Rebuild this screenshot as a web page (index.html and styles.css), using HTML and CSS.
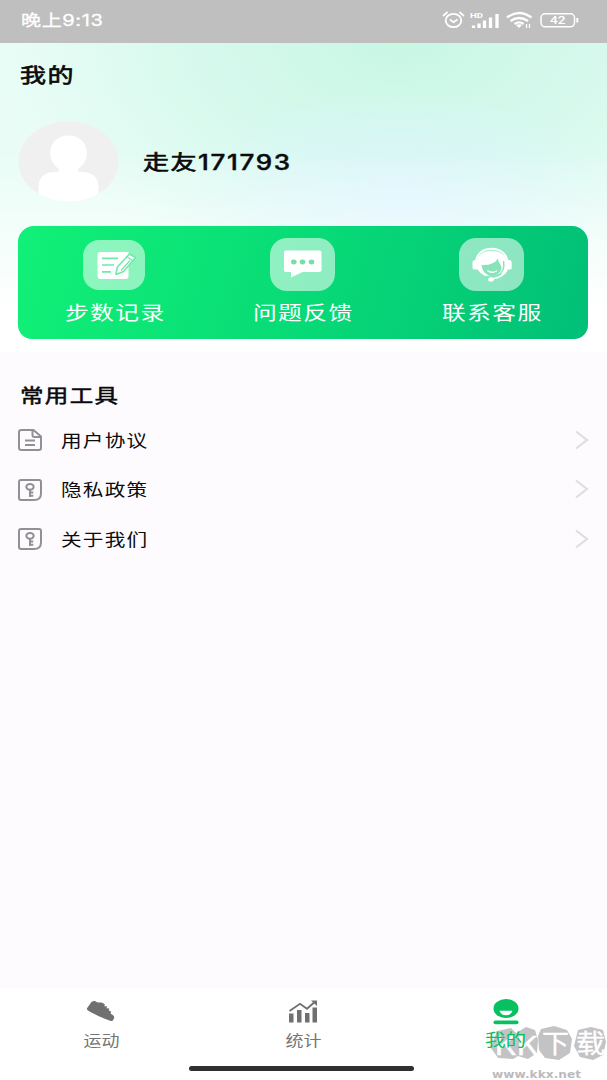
FILE: index.html
```
<!DOCTYPE html>
<html lang="zh-CN">
<head>
<meta charset="utf-8">
<title>我的</title>
<link rel="stylesheet" href="styles.css">
</head>
<body>
<div class="app">
  <header class="status">
    <span class="wide left clock">晚上9:13</span>
    <svg class="status-icons" width="140" height="24" viewBox="0 0 140 24" fill="none" stroke="#fff">
      <ellipse cx="13.5" cy="12.5" rx="7.8" ry="6.7" stroke-width="1.8"/>
      <path d="M10 11.5l3.5 2.7 4-2.7M3 8l4.500-4M24 8l-4.500-4" stroke-width="1.7"/>
      <text class="hd" x="30" y="9.500" textLength="13" lengthAdjust="spacingAndGlyphs">HD</text>
      <path d="M33 17.500v2.500M38.500 15.500v4.500M44 12.500v7.500M50 9.500v10.500M56.500 6v14" transform="translate(.5 0)" stroke-width="3.300"/>
      <path d="M67 9.500q12-9 24.500 0M70.500 13q8.500-6 17.500 0M74.500 16q5-3.300 9 0" stroke-width="2.300"/>
      <path d="M76 17q3-1.500 6 0l-3 3z" fill="#fff" stroke="none"/>
      <path d="M86.500 16v4M89.500 16v4" stroke-width="1.300"/>
      <rect x="101" y="5.800" width="33.500" height="13" rx="4" stroke-width="1.500"/>
      <path d="M137.300 10v4.500" stroke-width="2"/>
      <text class="level" x="110" y="16.300" textLength="15.500" lengthAdjust="spacingAndGlyphs">42</text>
    </svg>
  </header>

  <section class="hero">
    <h1 class="title"><span class="wide left">我的</span></h1>
    <div class="profile">
      <svg class="avatar" width="101" height="81" viewBox="0 0 101 81">
        <defs><clipPath id="face"><ellipse cx="50.500" cy="40.500" rx="50" ry="40.300"/></clipPath></defs>
        <g clip-path="url(#face)">
          <path fill="#f0f0f0" d="M0 0h101v81H0z"/>
          <path fill="#fff" d="M50.500 14.500c11 0 18.300 7.500 18.300 17.500 0 7-3.800 13-8.500 15.500-1.300 2.500.5 3.500 4 3.500 10 0 16.200 5.500 16.200 15V81h-60V66c0-9.500 6-15 16-15 3.500 0 5.500-1 4.200-3.500-4.500-2.500-8.500-8.500-8.500-15.500 0-10 7.300-17.500 18.300-17.500z"/>
        </g>
      </svg>
      <span class="wide left name">走友<span class="digits">171793</span></span>
    </div>
    <nav class="card">
      <a class="action">
        <span class="slot"><svg width="62" height="50" viewBox="0 0 62 50">
          <rect width="62" height="50" rx="16" fill="#fff" fill-opacity=".53"/>
          <path fill="#fff" d="M17 12h28.500v24q0 3-3 3H17.500q-3 0-3-3V14.500q0-2.500 2.500-2.500z"/>
          <path d="M19 18.300h16M19 25h12M19 31.800h9" fill="none" stroke="#6fe9a9" stroke-width="1.700"/>
          <path fill="#fff" stroke="#6fe9a9" stroke-width="1.500" stroke-linejoin="round" d="M46.500 14l6 3.500-12 14-7.500 3 1.300-7.500z"/>
          <path fill="none" stroke="#6fe9a9" stroke-width="1.200" d="M43.500 16.500l6 4M47 20.500l-9 10"/>
        </svg></span>
        <span class="wide label">步数记录</span>
      </a>
      <a class="action">
        <span class="slot"><svg width="65" height="53" viewBox="0 0 65 53">
          <rect width="65" height="53" rx="17" fill="#fff" fill-opacity=".55"/>
          <path fill="#fff" d="M15.500 12.500h34q2 0 2 2v17.500q0 2-2 2H32.500l-11.500 5.500v-5.500h-5.500q-1.500 0-1.500-2V14.500q0-2 1.500-2z"/>
          <g fill="#75dfaa"><ellipse cx="23.800" cy="24" rx="2.800" ry="2.400"/><ellipse cx="32.500" cy="24" rx="2.800" ry="2.400"/><ellipse cx="41.500" cy="24" rx="2.800" ry="2.400"/></g>
        </svg></span>
        <span class="wide label">问题反馈</span>
      </a>
      <a class="action">
        <span class="slot"><svg width="65" height="53" viewBox="0 0 65 53">
          <rect width="65" height="53" rx="17" fill="#fff" fill-opacity=".55"/>
          <path d="M17 23C19 6.500 46 6.500 48.500 23" fill="none" stroke="#fff" stroke-width="2"/>
          <path fill="#fff" d="M18 22C20.500 9.800 44.500 9.800 47.500 22h3q2.200.3 2.200 2v6q0 1.500-2 1.500h-2.200Q46 38 38 40.500H33q7-1.500 10-5L26 38q-4.500-2-7.500-6.500h-3q-2 0-2-1.500v-6q0-1.700 2.500-2z"/>
          <path fill="#86e4b8" d="M22.500 27q6 .5 10.500-1.500 4-1.500 6-5 0 3 2 5.500c2.500 3 1.500 7-1.500 9.500q-7 5-13.500-.5-3-3-3.500-8z"/>
          <path d="M29 33q4.500 2.700 8.500 0" fill="none" stroke="#fff" stroke-width="1.500" stroke-linecap="round"/>
          <path d="M48.500 31Q45 39 33 41" fill="none" stroke="#fff" stroke-width="1.600"/>
          <path d="M44.500 23Q46.500 33 38.500 38" fill="none" stroke="#86e4b8" stroke-width="1.400"/>
          <ellipse cx="32" cy="41.500" rx="2.800" ry="2.200" fill="#fff"/>
        </svg></span>
        <span class="wide label">联系客服</span>
      </a>
    </nav>
  </section>

  <main class="tools">
    <h2 class="subtitle"><span class="wide left">常用工具</span></h2>
    <a class="row">
      <svg class="lead" width="24" height="22" viewBox="0 0 24 22" stroke-linejoin="round">
        <path d="M3.500 1h12l7.500 6.500V19q0 2-2 2H3.500Q1 21 1 19V3q0-2 2.500-2zM14.500 1v5q0 2 2 2h6M7 11.500h10M7 16h10"/>
      </svg>
      <span class="wide left label">用户协议</span>
      <svg class="arrow" width="14" height="20" viewBox="0 0 14 20"><path d="M1 1.500L12 10 1 18.500"/></svg>
    </a>
    <a class="row">
      <svg class="lead" width="24" height="22" viewBox="0 0 24 22">
        <path d="M3 1h18q2 0 2 2v11.500q0 6.500-7 6.500H3q-2 0-2-2V3q0-2 2-2z"/><ellipse cx="12" cy="7.800" rx="3.700" ry="2.900"/><path d="M12 10.700V18M12 13.500h3.300M12 16.700h3.300"/>
      </svg>
      <span class="wide left label">隐私政策</span>
      <svg class="arrow" width="14" height="20" viewBox="0 0 14 20"><path d="M1 1.500L12 10 1 18.500"/></svg>
    </a>
    <a class="row">
      <svg class="lead" width="24" height="22" viewBox="0 0 24 22">
        <path d="M3 1h18q2 0 2 2v11.500q0 6.500-7 6.500H3q-2 0-2-2V3q0-2 2-2z"/><ellipse cx="12" cy="7.800" rx="3.700" ry="2.900"/><path d="M12 10.700V18M12 13.500h3.300M12 16.700h3.300"/>
      </svg>
      <span class="wide left label">关于我们</span>
      <svg class="arrow" width="14" height="20" viewBox="0 0 14 20"><path d="M1 1.500L12 10 1 18.500"/></svg>
    </a>
  </main>

  <footer class="tabbar">
    <svg class="watermark" width="120" height="56" viewBox="0 0 120 56">
      <path fill="#c3c3c5" d="M10 5l14-3 5 5 10-6 9 3 3 10-1 13-9 6-10-3-5 3-15-1-7-10zM54 3l13-3 13 4 5 9-2 14-11 7-14-2-6-8-1-14zM91 4l13-3 12 3 3 12-3 13-10 5-13-3-6-11z"/>
      <g class="mark"><text x="7" y="29" textLength="44" lengthAdjust="spacingAndGlyphs">KK</text><text x="55" y="27" textLength="27" lengthAdjust="spacingAndGlyphs">下</text><text x="89" y="27" textLength="29" lengthAdjust="spacingAndGlyphs">载</text></g>
      <text class="url" x="5" y="52" textLength="89" lengthAdjust="spacingAndGlyphs">www.kkx.net</text>
    </svg>
    <nav class="tabs">
      <a class="tab">
        <svg width="30" height="26" viewBox="0 0 30 26"><path fill="#707070" d="M5.500 3q3-2 5 0c2 1 4 0 6.500 1l2 1.800-.8 1.500 2.800 0-.5 2 2.800.3-.5 2 2.300.8-.5 2 2.500 1.800q1.500 1 1 3l-1.500 2.500q-1 .5-2.500 0C16 19 8 15 2 11.500Q0 10.500 1.500 8.500z"/></svg>
        <span class="wide">运动</span>
      </a>
      <a class="tab">
        <svg width="30" height="26" viewBox="0 0 30 26"><path d="M1.500 12L12 4.800l7 5 8-7" fill="none" stroke="#707070" stroke-width="1.900"/><path fill="#707070" d="M23 1.500h6V7zM1 14.500h4.500v9H1zM9 11h4.500v12.500H9zM17 14h4.500v9.500H17zM24.500 8.500H29v15h-4.500z"/></svg>
        <span class="wide">统计</span>
      </a>
      <a class="tab active">
        <svg width="26" height="26" viewBox="0 0 26 26"><ellipse cx="13" cy="9.500" rx="12.500" ry="9.500" fill="#07c160"/><path d="M6.500 11.800h13q-1.500 4.500-6.500 4.500t-6.500-4.500z" fill="#fff"/><rect x=".5" y="21.500" width="25" height="3.700" rx="1.850" fill="#07c160"/></svg>
        <span class="wide">我的</span>
      </a>
    </nav>
    <div class="home"></div>
  </footer>
</div>
</body>
</html>
```
FILE: styles.css
```
* { box-sizing: border-box; }
body {
  margin: 0;
  font-family: "Noto Sans CJK SC", sans-serif;
  color: #0b0b0d;
}
.app {
  position: relative;
  display: flex;
  flex-direction: column;
  width: 607px;
  height: 1080px;
  overflow: hidden;
  background: #fefbff;
}
/* Extended lettering used throughout the app */
.wide {
  display: inline-block;
  white-space: nowrap;
  transform: scaleX(1.25);
}
.left { transform-origin: left center; }
.label { letter-spacing: .060em; margin-right: -.060em; }

.status {
  display: flex;
  align-items: center;
  justify-content: space-between;
  height: 43px;
  flex: none;
  padding: 0 27px 3px 21px;
  background: #bfbfbf;
  color: #fff;
}
.clock {
  font: 16px/20px Inter, "Noto Sans CJK SC", sans-serif;
  letter-spacing: .5px;
  -webkit-text-stroke: .3px #fff;
}
.hd { font: bold 8px Roboto, sans-serif; fill: #fff; stroke: none; }
.level { font: 500 11px Roboto, sans-serif; fill: #fff; stroke: none; }

.hero {
  height: 309px;
  flex: none;
  padding: 12px 19px 0 18px;
  background:
    linear-gradient(to bottom, transparent 35%, rgba(255, 255, 255, .35) 55%, #fff 88%),
    radial-gradient(ellipse 230px 120px at 400px 165px, #ddf5ff 0%, rgba(222, 246, 255, 0) 100%),
    radial-gradient(ellipse 400px 250px at 400px -5px, #c8f7e4 0%, #d5f9ec 45%, rgba(232, 253, 246, 0) 100%),
    #e9fdf6;
}
.title {
  margin: 0 0 0 2px;
  height: 38px;
  line-height: 38px;
  font-size: 20.800px;
  font-weight: 400;
  letter-spacing: 1.200px;
  -webkit-text-stroke: .650px #0b0b0d;
}
.profile {
  display: flex;
  align-items: center;
  gap: 24px;
  margin-top: 28px;
}
.name {
  font-size: 20.800px;
  line-height: 30px;
  letter-spacing: 1.200px;
  margin-top: -2px;
  -webkit-text-stroke: .650px #0b0b0d;
}
.digits { font: 500 20.800px Inter, sans-serif; letter-spacing: 1.350px; -webkit-text-stroke-width: .4px; }
.card {
  display: grid;
  grid-template-columns: repeat(3, 1fr);
  height: 113px;
  margin-top: 24px;
  padding: 12px 2px 0;
  border-radius: 16px 16px 14px 14px;
  background: linear-gradient(105deg, #11f077 0%, #08dc76 48%, #01bf77 100%);
  color: #fff;
  font-size: 19px;
}
.action {
  display: flex;
  flex-direction: column;
  align-items: center;
  line-height: 30px;
  gap: 6px;
}
.slot { display: grid; place-items: center; height: 53px; }

.tools {
  flex: 1;
  padding: 24px 18px 0;
}
.subtitle {
  margin: 0 0 0 2px;
  height: 39px;
  line-height: 37px;
  font-size: 18.800px;
  font-weight: 400;
  letter-spacing: 1.100px;
  -webkit-text-stroke: .500px #0b0b0d;
}
.row {
  display: flex;
  align-items: center;
  height: 49.500px;
  gap: 19px;
  font-size: 16.500px;
  line-height: 24px;
}
.lead { fill: none; stroke: #929094; stroke-width: 2; position: relative; top: .5px; }
.arrow {
  margin-left: auto;
  fill: none;
  stroke: #e0dde2;
  stroke-width: 2.200;
}

.tabbar { position: relative; height: 92px; flex: none; padding-top: 10px; background: #fff; }
.tabs { position: relative; display: grid; grid-template-columns: repeat(3, 1fr); height: 68px; }
.tab {
  display: flex;
  flex-direction: column;
  align-items: center;
  gap: 4px;
  line-height: 22px;
  font-size: 14.400px;
  color: #757575;
}
.tab svg { margin-top: 1px; }
.active { color: #07c160; font-size: 16.500px; }
.active .wide { margin-top: -1px; }
.home { width: 225px; height: 5px; margin: 0 0 0 189px; border-radius: 3px; background: #303030; }

.watermark { position: absolute; left: 487px; top: 38px; }
.mark { font: 400 26px "Noto Sans CJK SC", sans-serif; fill: #fff; stroke: #fff; stroke-width: .3px; }
.url { font: bold 11px "DejaVu Sans", sans-serif; fill: #bbb; }
```
